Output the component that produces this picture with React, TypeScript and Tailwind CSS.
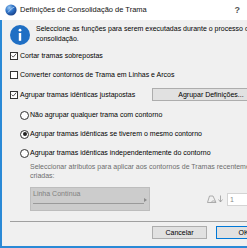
import React from 'react';

const Check = ({ checked, label }: { checked?: boolean; label: string }) => <div className="flex items-center h-[12px] whitespace-nowrap">
    <span className="w-[8px] h-[8px] border border-[#333] bg-white flex items-center justify-center shrink-0">
      {checked && <svg width="7" height="7" viewBox="0 0 7 7"><path d="M0.8 3.6 L2.6 5.4 L6.2 1.2" fill="none" stroke="#222" strokeWidth="0.9" /></svg>}
    </span>
    <span className="ml-[2px]">{label}</span>
  </div>;

const Radio = ({ on, label }: { on?: boolean; label: string }) => <div className="flex items-center h-[12px] ml-[10px] whitespace-nowrap">
    <span className="w-[9px] h-[9px] rounded-full border border-[#333] bg-white flex items-center justify-center shrink-0">
      {on && <span className="w-[4px] h-[4px] rounded-full bg-[#222]" />}
    </span>
    <span className="ml-[1px]">{label}</span>
  </div>;

const App = () => {
  return <div className="w-[247px] h-[248px] overflow-hidden bg-[#f0f0f0] flex flex-col text-[7px] leading-[10px] text-black font-['Liberation_Sans',Arial,sans-serif]">
      <div className="h-[20px] shrink-0 bg-white flex items-center pl-[5px] pr-[7px]">
        <svg width="12" height="12" viewBox="0 0 12 12">
          <defs>
            <radialGradient id="g" cx="0.35" cy="0.3" r="0.75">
              <stop offset="0" stopColor="#9cc9f2" />
              <stop offset="0.5" stopColor="#2e73c8" />
              <stop offset="1" stopColor="#173f86" />
            </radialGradient>
          </defs>
          <circle cx="6" cy="6" r="5.6" fill="url(#g)" />
          <path d="M3 8.5 C5 6 7 4 9.5 3" stroke="#dbeafe" strokeWidth="0.8" fill="none" opacity="0.8" />
        </svg>
        <span className="ml-[3px] text-[7.5px] text-[#111] whitespace-nowrap">Definições de Consolidação de Trama</span>
        <span className="ml-auto text-[9px] font-bold text-[#555]">?</span>
      </div>

      <div className="flex-1 flex flex-col border-l-2 border-b-2 border-[#2a89d6] pl-[8px]">
        <div className="flex items-start mt-[5px]">
          <svg width="20" height="20" viewBox="0 0 20 20" className="shrink-0">
            <circle cx="10" cy="10" r="10" fill="#1f6fc4" />
            <circle cx="10" cy="5.2" r="1.4" fill="#fff" />
            <rect x="8.8" y="8" width="2.4" height="7.8" fill="#fff" />
          </svg>
          <div className="ml-[6px] mt-[-1px] whitespace-nowrap">
            <div>Seleccione as funções para serem executadas durante o processo de</div>
            <div>consolidação.</div>
          </div>
        </div>

        <div className="mt-[4.5px]"><Check checked label="Cortar tramas sobrepostas" /></div>
        <div className="mt-[7.5px]"><Check label="Converter contornos de Trama em Linhas e Arcos" /></div>
        <div className="mt-[6.5px] h-[14px] flex items-center">
          <div className="w-[142px] shrink-0"><Check checked label="Agrupar tramas idênticas justapostas" /></div>
          <button className="w-[118px] h-[13px] shrink-0 bg-[#e1e1e1] border border-[#adadad] text-[7px] leading-[11px] text-black whitespace-nowrap">Agrupar Definições...</button>
        </div>
        <div className="mt-[7.5px]"><Radio label="Não agrupar qualquer trama com contorno" /></div>
        <div className="mt-[7px]"><Radio on label="Agrupar tramas idênticas se tiverem o mesmo contorno" /></div>
        <div className="mt-[7px]"><Radio label="Agrupar tramas idênticas independentemente do contorno" /></div>

        <div className="mt-[3px] ml-[20px] leading-[9px] text-[#6d6d6d] whitespace-nowrap">
          <div>Seleccionar atributos para aplicar aos contornos de Tramas recentemente</div>
          <div>criadas:</div>
        </div>

        <div className="mt-[7px] ml-[20px] flex items-center">
          <div className="w-[120px] h-[24px] shrink-0 bg-[#cccccc] border border-[#bdbdbd] relative">
            <div className="absolute left-[2px] top-[1px] text-[#808080] leading-[9px]">Linha Contínua</div>
            <div className="absolute left-[2px] right-[5px] top-[15px] h-px bg-[#9a9a9a]" />
            <svg width="3" height="4" viewBox="0 0 3 4" className="absolute right-[2px] top-[10px]"><path d="M0 0 L3 2 L0 4 Z" fill="#8a8a8a" /></svg>
          </div>
          <svg width="18" height="8" viewBox="0 0 18 8" className="ml-[57px] shrink-0">
            <path d="M0.5 7.5 L2.5 1 H6 L9 7.5 Z" fill="none" stroke="#9a9a9a" strokeWidth="0.8" />
            <path d="M4 7.5 C5 5.5 7 5.5 8 6.5" fill="none" stroke="#9a9a9a" strokeWidth="0.7" />
            <path d="M13.5 0.5 V7 M11.5 4.5 L13.5 7 L15.5 4.5" fill="none" stroke="#9a9a9a" strokeWidth="0.8" />
          </svg>
          <div className="ml-[2px] mt-[1.5px] w-[40px] h-[13px] shrink-0 bg-white border border-[#d4d4d4] pl-[2px] leading-[11px] text-[#8a8a8a]">1</div>
        </div>

        <div className="mt-[10px] h-px bg-[#a0a0a0]" />

        <div className="mt-[4px] flex">
          <button className="ml-[142px] w-[55px] h-[13px] shrink-0 bg-[#e1e1e1] border border-[#adadad] text-[7px] leading-[11px] text-black">Cancelar</button>
          <button className="ml-[9px] w-[55px] h-[13px] shrink-0 bg-[#e1e1e1] border border-[#0078d7] text-[7px] leading-[11px] text-black">OK</button>
        </div>
      </div>
    </div>;
};
export default App;
